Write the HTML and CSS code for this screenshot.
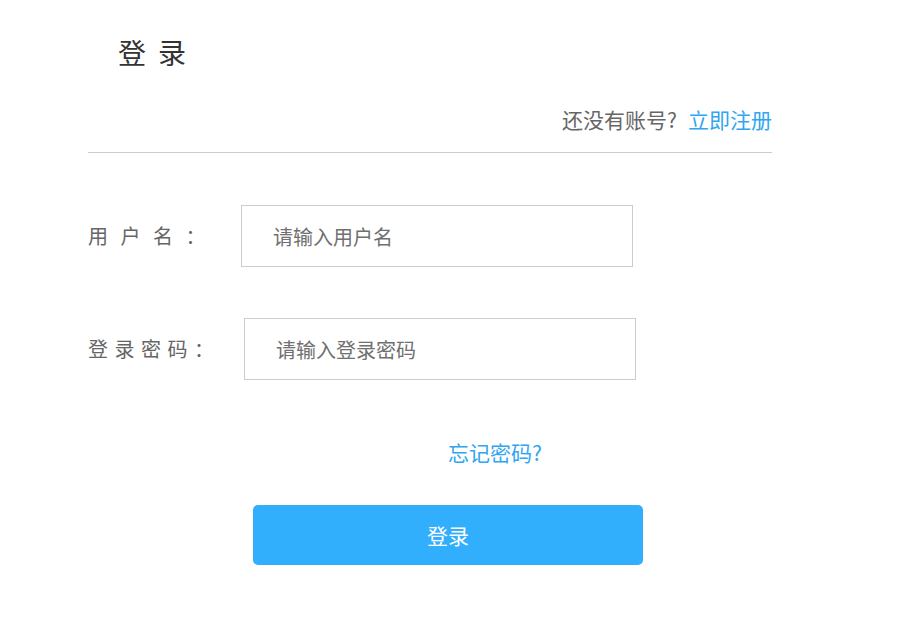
FILE: index.html
```html
<!DOCTYPE html>
<html lang="zh-CN">
<head>
<meta charset="utf-8">
<title>登录</title>
<link rel="stylesheet" href="styles.css">
</head>
<body>
<div class="page">
  <h1 class="title">登录</h1>
  <div class="reg-row">还没有账号?<a class="link reg-link" href="#">立即注册</a></div>
  <form class="form">
    <div class="field field-user">
      <label class="label label-user">用户名：</label>
      <input class="input" type="text" placeholder="请输入用户名">
    </div>
    <div class="field field-pass">
      <label class="label label-pass">登录密码：</label>
      <input class="input" type="password" placeholder="请输入登录密码">
    </div>
    <div class="forgot-row"><a class="link" href="#">忘记密码?</a></div>
    <button class="submit" type="button">登录</button>
  </form>
</div>
</body>
</html>
```
FILE: styles.css
```css
html, body {
  margin: 0;
  padding: 0;
  background: #fff;
}
body {
  font-family: "Noto Sans CJK SC", "Noto Sans", sans-serif;
  color: #666;
}
.page {
  width: 684px;
  padding: 0 0 0 88px;
}
.title {
  margin: 38px 0 0 30px;
  font-size: 28px;
  line-height: 28px;
  font-weight: 400;
  letter-spacing: 12px;
  color: #333;
}
.reg-row {
  margin-top: 43px;
  padding-bottom: 22px;
  border-bottom: 1px solid #ccc;
  text-align: right;
  font-size: 21px;
  line-height: 21px;
}
.link {
  color: #31a6f0;
  text-decoration: none;
}
.reg-link {
  margin-left: 11px;
}
.form {
  display: flex;
  flex-direction: column;
  align-items: flex-start;
  margin: 0;
}
.field {
  display: flex;
  align-items: center;
}
.field-user {
  margin-top: 52px;
}
.field-pass {
  margin-top: 51px;
}
.label {
  font-size: 20px;
  line-height: 20px;
  color: #666;
}
.label-user {
  width: 153px;
  letter-spacing: 12.5px;
}
.label-pass {
  width: 156px;
  letter-spacing: 6.5px;
}
.input {
  box-sizing: border-box;
  width: 392px;
  height: 62px;
  margin: 0;
  padding: 0 0 0 31px;
  border: 1px solid #ccc;
  border-radius: 0;
  outline: none;
  font-family: inherit;
  font-size: 20px;
  color: #333;
  background: #fff;
}
.input::placeholder {
  color: #707070;
}
.forgot-row {
  margin: 60px 0 0 360px;
  font-size: 21px;
  line-height: 24px;
}
.submit {
  box-sizing: border-box;
  width: 390px;
  height: 60px;
  margin: 41px 0 0 165px;
  padding: 0;
  border: none;
  border-radius: 5px;
  background: #31aefc;
  color: #fff;
  font-family: inherit;
  font-size: 21px;
  cursor: pointer;
}
```
